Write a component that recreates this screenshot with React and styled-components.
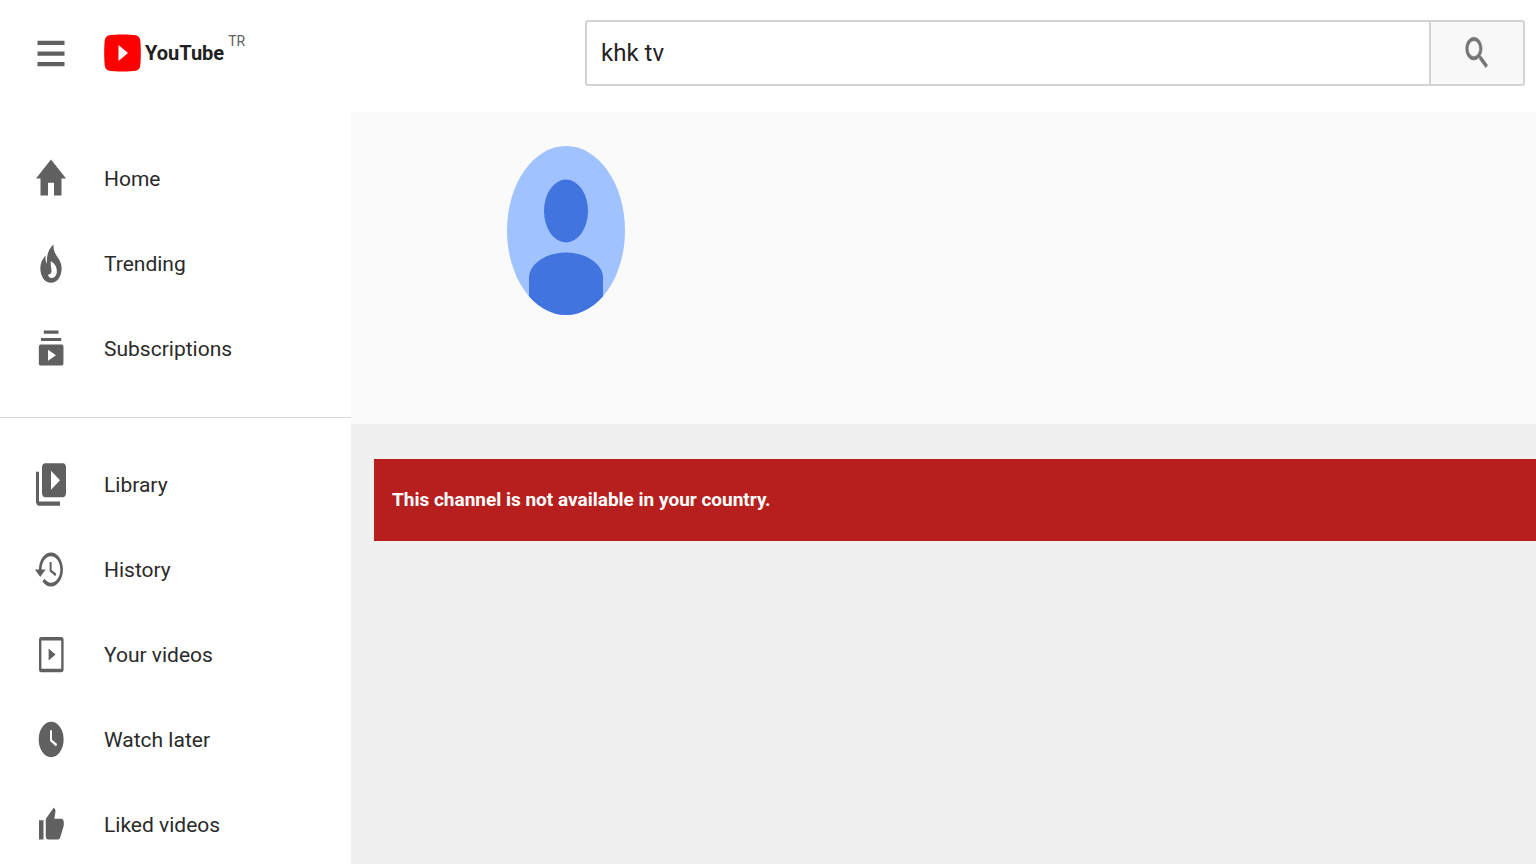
import React, { useState } from 'react';
import styled, { createGlobalStyle } from 'styled-components';

const GlobalStyle = createGlobalStyle`
	* {
		box-sizing: border-box;
	}

	body {
		margin: 0;
		background-color: #fff;
		color: #2a2a2a;
		font-family: Roboto, 'Liberation Sans', sans-serif;
	}
`;

const Page = styled.div`
	display: flex;
	flex-direction: column;
	height: 100vh;
	overflow: hidden;
`;

const Header = styled.header`
	display: flex;
	flex: none;
	align-items: center;
	padding: 20px 11px 26px 33px;
`;

const HeaderStart = styled.div`
	display: flex;
	flex: 0 0 37%;
	align-items: center;
	gap: 35px;
`;

const IconButton = styled.button`
	display: flex;
	padding: 0;
	border: none;
	background: none;
	color: #606060;
	cursor: pointer;
`;

const Icon = styled.svg`
	display: block;
	flex: none;
	width: 36px;
	height: 51px;
	fill: currentColor;
`;

const LogoLink = styled.a`
	display: flex;
	align-items: center;
	gap: 4px;
	color: #212121;
	text-decoration: none;
`;

const LogoMark = styled.svg`
	display: block;
	width: 37px;
	height: 38px;
`;

const LogoText = styled.span`
	font-size: 20px;
	font-weight: 700;
	line-height: 38px;
`;

const Country = styled.span`
	align-self: flex-start;
	color: #606060;
	font-size: 14px;
	line-height: 14px;
`;

const SearchForm = styled.form`
	display: flex;
	flex: 1;
	height: 66px;
`;

const SearchInput = styled.input`
	flex: 1;
	min-width: 0;
	padding: 0 14px;
	border: 2px solid #d3d3d3;
	border-right: none;
	border-radius: 3px 0 0 3px;
	outline: none;
	color: #222;
	font-family: inherit;
	font-size: 24px;
`;

const SearchButton = styled.button`
	display: flex;
	align-items: center;
	justify-content: center;
	width: 96px;
	padding: 0;
	border: 2px solid #d3d3d3;
	border-radius: 0 3px 3px 0;
	background-color: #f8f8f8;
	color: #757575;
	cursor: pointer;
`;

const SearchIcon = styled(Icon)`
	width: 30px;
	height: 42px;
`;

const Body = styled.div`
	display: flex;
	flex: 1;
	min-height: 0;
`;

const Sidebar = styled.nav`
	flex: none;
	width: 351px;
	overflow-y: auto;
	scrollbar-width: none;
`;

const NavList = styled.ul`
	margin: 0;
	padding: 24px 0 26px;
	list-style: none;

	& + & {
		border-top: 1px solid #d9d9d9;
	}
`;

const NavLink = styled.a`
	display: flex;
	align-items: center;
	gap: 35px;
	height: 85px;
	padding: 0 33px;
	color: #2a2a2a;
	font-size: 21px;
	text-decoration: none;

	& > svg {
		color: #606060;
	}
`;

const Main = styled.main`
	flex: 1;
	min-width: 0;
	background-color: #f0f0f0;
`;

const ChannelHeader = styled.section`
	padding: 34px 156px 109px;
	background-color: #fafafa;
`;

const Avatar = styled.svg`
	display: block;
	width: 118px;
	height: 169px;
`;

const Alert = styled.p`
	margin: 35px 0 0 23px;
	padding: 24px 18px;
	background-color: #b71f1e;
	color: #fff;
	font-size: 19px;
	font-weight: 700;
	line-height: 34px;
`;

const icons = {
	menu: <path d='M3 18h18v-2H3v2zm0-5h18v-2H3v2zm0-7v2h18V6H3z' />,
	search: (
		<path
			stroke='currentColor'
			strokeWidth='.4'
			d='M15.5 14h-.79l-.28-.27C15.41 12.59 16 11.11 16 9.5 16 5.91 13.09 3 9.5 3S3 5.91 3 9.5 5.91 16 9.5 16c1.61 0 3.09-.59 4.23-1.57l.27.28v.79l5 4.99L20.49 19l-4.99-5zm-6 0C7.01 14 5 11.99 5 9.5S7.01 5 9.5 5 14 7.01 14 9.5 11.99 14 9.5 14z'
		/>
	),
	home: <path d='M10 20v-6h4v6h5v-8h3L12 3 2 12h3v8z' />,
	trending: (
		<path
			fillRule='evenodd'
			d='M13.7 3.1C10.4 5.1 8.9 8 9.3 12.2 8.5 11.3 8.2 10 8.4 8.2 6 10 4.9 12 4.9 14.2c0 3.9 3.1 6.9 7.1 6.9s7.1-3 7.1-6.9C19.1 9.5 13.2 8.3 13.7 3.1zM12.3 18.8c-1.2 0-2.1-.6-2.3-1.6 1.600.2 2.500-.7 2.300-2.300-.2-1.400-.7-2.100-.4-3.900 2.400.9 4 2.500 4 4.600 0 1.900-1.600 3.200-3.600 3.200z'
		/>
	),
	subscriptions: (
		<path d='M7.2 3.5h9.8V5H7.2zM5.3 7h13.5v1.5H5.3zM5 10.1h14.2c.6 0 1.1.5 1.1 1.1v7.7c0 .6-.5 1.1-1.1 1.1H5c-.6 0-1.1-.5-1.1-1.1v-7.7c0-.6.5-1.1 1.1-1.1zm5 2.5v5.2l5.3-2.6z' />
	),
	library: (
		<path d='M4 6H2v14c0 1.1.9 2 2 2h14v-2H4V6zm16-4H8c-1.1 0-2 .9-2 2v12c0 1.1.9 2 2 2h12c1.1 0 2-.9 2-2V4c0-1.1-.9-2-2-2zm-8 12.5v-9l6 4.5-6 4.5z' />
	),
	history: (
		<path
			transform='translate(.4 1.3) scale(.89)'
			d='M13 3c-4.97 0-9 4.03-9 9H1l3.89 3.89.07.14L9 12H6c0-3.87 3.13-7 7-7s7 3.13 7 7-3.13 7-7 7c-1.93 0-3.68-.79-4.94-2.06l-1.42 1.42C8.27 19.99 10.51 21 13 21c4.97 0 9-4.03 9-9s-4.03-9-9-9zm-1 5v5l4.28 2.54.72-1.21-3.5-2.08V8H12z'
		/>
	),
	videos: (
		<>
			<rect x='4.8' y='4.6' width='14.8' height='14.9' rx='.7' fill='none' stroke='currentColor' strokeWidth='1.6' />
			<path d='M10.4 9.2v5.6l4.6-2.8z' />
		</>
	),
	later: (
		<>
			<circle cx='12.1' cy='12' r='8.3' />
			<path d='M12 7.7v4.7l3.7 2.3' fill='none' stroke='#fff' strokeWidth='1.3' />
		</>
	),
	liked: (
		<path
			transform='translate(3.25 3.25) scale(.75)'
			d='M1 21h4V9H1v12zm22-11c0-1.1-.9-2-2-2h-6.31l.95-4.57.03-.32c0-.41-.17-.79-.44-1.06L14.17 1 7.59 7.59C7.22 7.95 7 8.45 7 9v10c0 1.1.9 2 2 2h9c.83 0 1.54-.5 1.84-1.22l3.02-7.05c.09-.23.14-.47.14-.73v-2z'
		/>
	),
};

const mainLinks = [
	{ icon: 'home', label: 'Home' },
	{ icon: 'trending', label: 'Trending' },
	{ icon: 'subscriptions', label: 'Subscriptions' },
];

const libraryLinks = [
	{ icon: 'library', label: 'Library' },
	{ icon: 'history', label: 'History' },
	{ icon: 'videos', label: 'Your videos' },
	{ icon: 'later', label: 'Watch later' },
	{ icon: 'liked', label: 'Liked videos' },
];

const Glyph = ({ name, as: Component = Icon }) => (
	<Component viewBox='0 0 24 24' preserveAspectRatio='none' aria-hidden='true'>
		{icons[name]}
	</Component>
);

const NavSection = ({ links }) => (
	<NavList>
		{links.map(({ icon, label }) => (
			<li key={label}>
				<NavLink href='#'>
					<Glyph name={icon} />
					<span>{label}</span>
				</NavLink>
			</li>
		))}
	</NavList>
);

const Logo = () => (
	<LogoLink href='#'>
		<LogoMark viewBox='0 0 37 38' aria-hidden='true'>
			<path
				fill='#f00'
				d='M5 1.3C11 .3 26 .3 32 1.3c2.5.5 3.8 2.5 4.2 5 .8 6 .8 19.4 0 25.4-.4 2.5-1.7 4.5-4.2 5-6 1-21 1-27 0-2.5-.5-3.8-2.5-4.2-5C0 25.7 0 12.3.8 6.3 1.2 3.8 2.5 1.8 5 1.3z'
			/>
			<path fill='#fff' d='M14.5 11v16l9.5-8z' />
		</LogoMark>
		<LogoText>YouTube</LogoText>
		<Country>TR</Country>
	</LogoLink>
);

const App = () => {
	const [query, setQuery] = useState('khk tv');

	return (
		<React.Fragment>
			<GlobalStyle />
			<Page>
				<Header>
					<HeaderStart>
						<IconButton type='button' aria-label='Menu'>
							<Glyph name='menu' />
						</IconButton>
						<Logo />
					</HeaderStart>
					<SearchForm role='search' onSubmit={(e) => e.preventDefault()}>
						<SearchInput
							type='text'
							aria-label='Search'
							value={query}
							onChange={(e) => setQuery(e.target.value)}
						/>
						<SearchButton type='submit' aria-label='Search'>
							<Glyph name='search' as={SearchIcon} />
						</SearchButton>
					</SearchForm>
				</Header>
				<Body>
					<Sidebar>
						<NavSection links={mainLinks} />
						<NavSection links={libraryLinks} />
					</Sidebar>
					<Main>
						<ChannelHeader>
							<Avatar viewBox='0 0 118 169' role='img' aria-label='Channel avatar'>
								<clipPath id='avatar-clip'>
									<ellipse cx='59' cy='84.5' rx='59' ry='84.5' />
								</clipPath>
								<g clipPath='url(#avatar-clip)'>
									<rect width='118' height='169' fill='#a0c3ff' />
									<ellipse cx='59' cy='65' rx='22' ry='31.5' fill='#4274e0' />
									<path
										fill='#4274e0'
										d='M22 169v-37c0-14 17-25.5 37-25.5S96 118 96 132v37z'
									/>
								</g>
							</Avatar>
						</ChannelHeader>
						<Alert role='alert'>This channel is not available in your country.</Alert>
					</Main>
				</Body>
			</Page>
		</React.Fragment>
	);
};

export default App;
